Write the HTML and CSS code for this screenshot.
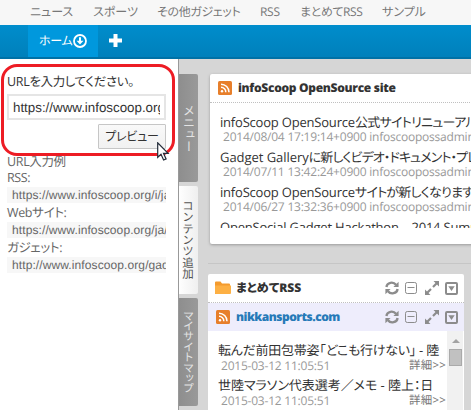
FILE: index.html
```html
<!DOCTYPE html>
<html lang="ja">
<head>
<meta charset="utf-8">
<title>infoScoop</title>
<link rel="stylesheet" href="styles.css">
</head>
<body>
<svg class="defs" width="0" height="0">
  <symbol id="rss" viewBox="0 0 14 14"><rect width="14" height="14" rx="1.5" fill="#e77f2b"/><circle cx="4" cy="10.3" r="1.2" fill="#fff"/><path d="M3 6.3a4.8 4.8 0 0 1 4.8 5M3 3.2a8 8 0 0 1 8 8.1" fill="none" stroke="#fff" stroke-width="1.5"/></symbol>
  <symbol id="refresh" viewBox="0 0 14 14"><path d="M1.4 6C2 1.300 8.300.200 11 3.800M12.600 8C12 12.700 5.700 13.800 3 10.200" fill="none" stroke="#8c8c8c" stroke-width="2.300"/><path d="M13.600.800V6H8.400zM.400 13.200V8h5.200z" fill="#8c8c8c"/></symbol>
  <symbol id="minus" viewBox="0 0 12 12"><rect x=".5" y=".5" width="11" height="11" rx="1.800" fill="none" stroke="#8c8c8c"/><path d="M2.500 5.500h7" stroke="#8c8c8c"/></symbol>
  <symbol id="expand" viewBox="0 0 14 14"><path d="M8.500 0H14v5.500zM0 8.500V14h5.500z" fill="#8c8c8c"/><path d="M12 2L8 6M6 8l-4 4" stroke="#8c8c8c" stroke-width="2.200"/></symbol>
  <symbol id="menu" viewBox="0 0 13 13"><rect x="1" y="1" width="11" height="11" rx="1" fill="none" stroke="#8c8c8c" stroke-width="2"/><path d="M3.300 4.300h6.400L6.500 9z" fill="#8c8c8c"/></symbol>
</svg>
<nav class="sites"><a class="n1">ニュース</a><a class="n2">スポーツ</a><a class="n3">その他ガジェット</a><a class="n4">RSS</a><a class="n5">まとめてRSS</a><a class="n6">サンプル</a></nav>
<header class="tabs">
  <div class="tab"><span>ホーム</span><svg width="14" height="14" viewBox="0 0 14 14"><circle cx="7" cy="7" r="6" fill="none" stroke="#fff" stroke-width="1.800"/><path d="M6 3.200h2v3.600h2.500L7 10.600 3.500 6.800H6z" fill="#fff"/></svg></div>
  <svg class="plus" width="13" height="13" viewBox="0 0 13 13"><path d="M6.500 0v13M0 6.500h13" stroke="#fff" stroke-width="4"/></svg>
</header>
<main>
  <aside class="side">
    <div class="ask">URLを入力してください。</div>
    <div class="field"><div class="value">https://www.infoscoop.org/</div></div>
    <div class="actions"><button>プレビュー</button></div>
    <div class="label first">URL入力例</div>
    <div class="label">RSS:</div>
    <div class="sample">https://www.infoscoop.org/i/ja/</div>
    <div class="label">Webサイト:</div>
    <div class="sample">https://www.infoscoop.org/ja/</div>
    <div class="label">ガジェット:</div>
    <div class="sample">http://www.infoscoop.org/gadget</div>
    <div class="highlight"></div>
    <svg class="cursor" width="13" height="20" viewBox="0 0 13 20"><path d="M.7.800v14.500l3.300-3.100 2.600 5.800 2.500-1.100-2.600-5.600h4.600z" fill="#fff" stroke="#222b38" stroke-width="1.200"/></svg>
  </aside>
  <div class="rail">
    <div class="vtab v1"><span>メニュー</span></div>
    <div class="vtab v2 on"><span>コンテンツ追加</span></div>
    <div class="vtab v3"><span>マイサイトマップ</span></div>
  </div>
  <section class="portal">
    <article class="card news">
      <h2><svg width="14" height="14"><use href="#rss"/></svg><b class="t1">infoScoop OpenSource site</b></h2>
      <div class="list">
        <div class="item"><p><span class="la">infoScoop OpenSource</span><span class="c1">公式サイトリニューアル</span></p><small>2014/08/04 17:19:14+0900 infoscoopossadmin</small></div>
        <div class="item"><p><span class="lb">Gadget Gallery</span><span class="c2">に新しくビデオ・ドキュメント・プレ</span></p><small>2014/07/11 13:42:24+0900 infoscoopossadmin</small></div>
        <div class="item"><p><span class="la">infoScoop OpenSource</span><span class="c3">サイトが新しくなります</span></p><small>2014/06/27 13:32:36+0900 infoscoopossadmin</small></div>
        <div class="item"><p><span class="la">OpenSocial Gadget Hackathon – 2014 Summer</span></p></div>
      </div>
    </article>
    <div class="group">
      <article class="card multi">
        <h2><svg width="16" height="14" viewBox="0 0 16 14"><path d="M0 1.500Q0 .500 1 .500h4.500l1.500 2h7q1 0 1 1V13H0z" fill="#f49b2e"/><path d="M0 4.500h16V12q0 1-1 1H1q-1 0-1-1z" fill="#fdb044"/></svg><b class="t2">まとめてRSS</b>
          <span class="tools"><svg width="14" height="14"><use href="#refresh"/></svg><svg width="12" height="12"><use href="#minus"/></svg><svg width="14" height="14"><use href="#expand"/></svg><svg width="13" height="13"><use href="#menu"/></svg></span></h2>
        <h3><svg width="14" height="14"><use href="#rss"/></svg><b class="t3">nikkansports.com</b>
          <span class="tools"><svg width="14" height="14"><use href="#refresh"/></svg><svg width="12" height="12"><use href="#minus"/></svg><svg width="14" height="14"><use href="#expand"/></svg><svg width="13" height="13"><use href="#menu"/></svg></span></h3>
        <div class="feed">
          <div class="entries">
            <div class="item"><p class="e1">転んだ前田包帯姿「どこも行けない」 - 陸</p><small>2015-03-12 11:05:51<i>詳細&gt;&gt;</i></small></div>
            <div class="item"><p class="e2">世陸マラソン代表選考／メモ - 陸上：日</p><small>2015-03-12 11:05:51<i>詳細&gt;&gt;</i></small></div>
          </div>
          <div class="scroll"><div class="up"></div><div class="thumb"></div></div>
        </div>
      </article>
    </div>
  </section>
</main>
</body>
</html>
```
FILE: styles.css
```css
* { box-sizing: border-box; }
html, body { margin: 0; height: 410px; overflow: hidden; }
body { width: 471px; display: flex; flex-direction: column; background: #d6d6d6; color: #333; font: 13px/18px "Open Sans", "Noto Sans CJK JP", sans-serif; font-feature-settings: "palt"; white-space: nowrap; text-rendering: geometricPrecision; }
svg { display: block; flex: none; }
.defs { position: absolute; }
p, h2, h3 { margin: 0; }

.sites { height: 25px; flex: none; display: flex; background: #f7f7f7; color: #777; padding-left: 30px; line-height: 24px; font-size: 12px; }
.sites a { flex: none; }
.n1 { width: 63px; }
.n2 { width: 64px; }
.n3 { width: 103px; letter-spacing: -.35px; }
.n4 { width: 40px; letter-spacing: -.3px; }
.n5 { width: 82px; letter-spacing: -.4px; }

.tabs { height: 34px; flex: none; display: flex; padding-left: 28px; background: linear-gradient(#008dcc, #0080bb); border-bottom: 2px solid #0071a6; }
.tab { width: 70px; height: 32px; display: flex; align-items: center; background: #0098dd; color: #fff; padding-left: 11px; font-size: 12px; }
.tab span { width: 34px; letter-spacing: -.3px; }
.plus { margin: 9px 0 0 11px; }

main { flex: 1; display: flex; min-height: 0; }
.side { width: 179px; flex: none; position: relative; background: #fff; border-right: 1px solid #999; padding: 15px 12px 0 7px; }
.ask { height: 20px; line-height: 16px; font-size: 12.5px; letter-spacing: -.35px; }
.field { width: 159px; height: 26px; border: 2px solid #e5e5e5; padding: 0 4px; }
.value { overflow: hidden; height: 22px; line-height: 23px; font-family: "Liberation Sans", sans-serif; font-size: 13.333px; }
.actions { display: flex; justify-content: flex-end; width: 159px; margin-top: 4px; }
button { width: 68px; height: 25px; padding: 0; border: 1px solid #c6c6c6; border-radius: 1px; background: linear-gradient(#f9f9f9, #f1f1f1); color: #333; font: 12px/20px "Open Sans", "Noto Sans CJK JP", sans-serif; font-feature-settings: "palt"; letter-spacing: -.2px; }
.label { height: 19px; line-height: 19px; color: #666; font-size: 12.5px; letter-spacing: -.35px; }
.label.first { height: 16px; line-height: 20px; margin-top: 3px; }
.sample { width: 159px; height: 16px; line-height: 16px; padding-left: 5px; overflow: hidden; background: #f7f7f7; color: #666; font-family: "Liberation Sans", sans-serif; font-size: 12px; letter-spacing: .1px; }
.highlight { position: absolute; left: 1px; top: 5px; width: 174px; height: 92px; border: 3px solid #ed1c24; border-radius: 16px; }
.cursor { position: absolute; left: 157px; top: 83px; }

.rail { width: 19px; flex: none; padding-top: 15px; display: flex; flex-direction: column; gap: 4px; }
.vtab { height: 108px; flex: none; display: flex; align-items: center; justify-content: center; border-radius: 0 2px 2px 0; background: linear-gradient(90deg, #8e8e8e, #999); color: #e4e4e4; font-size: 12px; line-height: 18px; }
.vtab span { writing-mode: vertical-rl; font-family: "Noto Sans CJK JP", sans-serif; font-feature-settings: normal; }
.vtab.on { margin-left: -1px; background: linear-gradient(90deg, #fff, #efefef); color: #555; }
.v2 span { font-size: 11.5px; letter-spacing: -.2px; }
.v3 span { font-size: 11px; letter-spacing: -.6px; }

.portal { flex: 1; min-width: 0; padding: 15px 0 0 10px; overflow: hidden; }
.card { background: #fff; border-radius: 2px; box-shadow: 0 1px 3px #999; }
.card h2 { height: 29px; display: flex; align-items: center; border-bottom: 1px dotted #c0c0c0; font-size: 12px; }
.news { margin-left: 2px; width: 280px; height: 170px; }
.news h2 { padding-left: 8px; }
.news b { margin-left: 6px; letter-spacing: -.3px; }
.list { height: 125px; overflow: hidden; padding: 10px 0 0 10px; }
.item { height: 35px; }
.item p { height: 18px; line-height: 18px; }
.item small { display: block; height: 17px; line-height: 12px; font-size: 12px; letter-spacing: -.22px; color: #999; padding-left: 3px; }
.la { letter-spacing: -.2px; }
.lb { letter-spacing: -.05px; }
.c1 { letter-spacing: -.7px; }
.c2 { letter-spacing: -.9px; }
.c3 { letter-spacing: -.75px; }
.group { border-top: 1px solid #c6c6c6; margin-top: 19px; padding-top: 10px; }
.multi { width: 256px; height: 160px; box-shadow: none; }
.multi h2, .multi h3 { display: flex; align-items: center; padding: 0 6px 0 7px; }
.multi h3 { height: 28px; padding-left: 8px; background: #eeedfc; color: #267ab8; font-size: 12px; }
.multi b { margin-left: 5px; }
.multi h3 b { margin-left: 6px; letter-spacing: -.5px; }
.tools { margin-left: auto; display: flex; align-items: center; gap: 7px; }
.tools svg:nth-child(1) { margin-right: -1px; }
.tools svg:nth-child(3) { margin-left: 1px; margin-right: -1px; }
.feed { display: flex; height: 103px; }
.entries { width: 239px; padding: 10px 1px 0 10px; }
.entries small { display: flex; justify-content: space-between; line-height: 13px; }
.entries i { font-style: normal; font-size: 11.5px; letter-spacing: .2px; color: #777; }
.e1 { letter-spacing: -.25px; }
.e2 { letter-spacing: -.05px; }
.scroll { width: 16px; background: #f1f1f1; padding: 8px 1px 0 2px; }
.up { width: 0; margin: 0 auto; border: 4px solid transparent; border-top: 0; border-bottom-color: #a3a3a3; }
.thumb { margin-top: 6px; height: 17px; background: #c1c1c1; border: 1px solid #aaa; }
```
